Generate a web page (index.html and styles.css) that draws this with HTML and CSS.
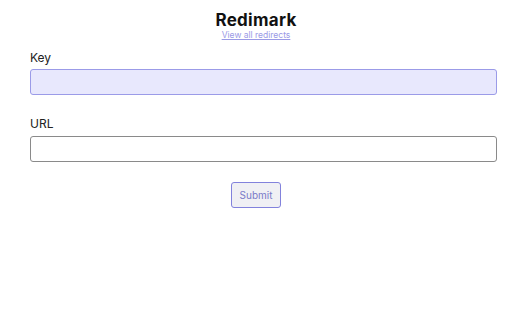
FILE: index.html
```html
<!DOCTYPE html>
<html>
<head>
<meta charset="utf-8">
<link rel="stylesheet" href="styles.css">
</head>
<body>
<header class="head">
  <h1 class="title">Redimark</h1>
  <a class="all" href="#">View all redirects</a>
</header>
<form class="form">
  <label class="label key-label">Key</label>
  <input class="field key" type="text">
  <label class="label url">URL</label>
  <input class="field" type="text">
  <div class="actions"><button class="submit" type="button">Submit</button></div>
</form>
</body>
</html>
```
FILE: styles.css
```css
html, body { margin: 0; padding: 0; background: #fff; }
body { font-family: "Inter", "Noto Sans", sans-serif; color: #222; }
.head { display: flex; flex-direction: column; align-items: center; padding-top: 11px; }
.title { margin: 0; font-size: 17px; line-height: 19px; font-weight: 700; color: #111; letter-spacing: 0.3px; }
.all { font-size: 8.5px; line-height: 11px; color: #9a9ae6; text-decoration: underline; }
.form { display: flex; flex-direction: column; margin: 6px 15px 0 30px; }
.label { font-size: 12px; line-height: 16px; color: #222; }
.label.key-label { margin-top: 3px; margin-bottom: 3px; }
.label.url { margin-top: 21px; margin-bottom: 4px; }
.field { box-sizing: border-box; height: 26px; border: 1px solid #8a8a8a; border-radius: 3px; background: #fff; margin: 0; padding: 0 6px; }
.field.key { background: #e8e8fd; border-color: #9b9be8; }
.actions { display: flex; justify-content: center; margin-top: 20px; margin-left: -15px; }
.submit { box-sizing: border-box; width: 50px; height: 26px; border: 1px solid #8282dc; border-radius: 3px; background: #f0f0f4; color: #7a7ac8; font-family: "Inter", "Noto Sans", sans-serif; font-size: 10px; padding: 0; }
```
